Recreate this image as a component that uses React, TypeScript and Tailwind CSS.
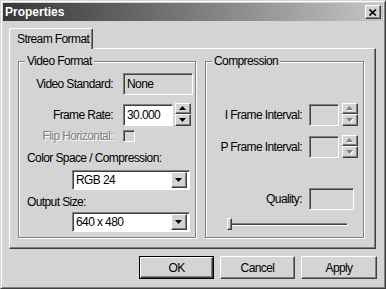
const ui = "font-['Liberation_Sans',Arial,sans-serif] text-[12px] tracking-[-0.6px] text-black";

const raised =
  'border border-t-white border-l-white border-r-[#404040] border-b-[#404040] shadow-[inset_-1px_-1px_0_#808080] bg-[#d4d4d4]';
const sunken =
  'border border-t-[#808080] border-l-[#808080] border-r-white border-b-white shadow-[inset_1px_1px_0_#404040]';

function Arrow({ dir, disabled }: { dir: 'up' | 'down'; disabled?: boolean }) {
  const d = dir === 'up' ? 'M3.5 0 L7 4 L0 4 Z' : 'M0 0 L7 0 L3.5 4 Z';
  return (
    <svg width="8" height="5" viewBox="0 0 8 5" className="block">
      {disabled && <path d={d} transform="translate(1 1)" fill="#fff" />}
      <path d={d} fill={disabled ? '#808080' : '#000'} />
    </svg>
  );
}

function Spinner({ disabled }: { disabled?: boolean }) {
  return (
    <div className="flex flex-col w-[16px] h-[23px]">
      <div className={`${raised} h-[11px] flex items-center justify-center`}>
        <Arrow dir="up" disabled={disabled} />
      </div>
      <div className={`${raised} h-[12px] flex items-center justify-center`}>
        <Arrow dir="down" disabled={disabled} />
      </div>
    </div>
  );
}

function Combo({ value }: { value: string }) {
  return (
    <div className={`${sunken} bg-white w-[118px] h-[20px] flex items-center p-[2px] pl-[3px]`}>
      <span className="flex-1 leading-none">{value}</span>
      <div className={`${raised} w-[16px] h-[16px] flex items-center justify-center`}>
        <Arrow dir="down" />
      </div>
    </div>
  );
}

function Group({ title, className, children }: { title: string; className: string; children: React.ReactNode }) {
  return (
    <div
      className={`relative border border-[#808080] shadow-[1px_1px_0_#fff,inset_1px_1px_0_#fff] h-[177px] ${className}`}
    >
      <span className="absolute -top-[8px] left-[6px] bg-[#d4d4d4] px-[2px] leading-[14px]">{title}</span>
      {children}
    </div>
  );
}

export default function App() {
  return (
    <div
      className={`${ui} w-[386px] h-[289px] bg-[#d4d4d4] p-[3px] flex flex-col border border-t-[#d4d4d4] border-l-[#d4d4d4] border-r-[#404040] border-b-[#404040] shadow-[inset_1px_1px_0_#fff,inset_-1px_-1px_0_#808080]`}
    >
      {/* Title bar */}
      <div className="h-[18px] -mt-[1px] -mx-[1px] flex items-center justify-between bg-linear-to-r from-[#383838] to-[#c6c6c6] pl-[2px] pr-[2px]">
        <span className="font-bold text-[12px] tracking-normal text-white">Properties</span>
        <div className={`${raised} w-[16px] h-[14px] flex items-center justify-center`}>
          <svg width="8" height="7" viewBox="0 0 8 7">
            <path d="M0.5 0.5 L7 6.5 M7 0.5 L0.5 6.5" stroke="#000" strokeWidth="1.6" />
          </svg>
        </div>
      </div>

      {/* Tabs */}
      <div className="pl-[5px] pr-[6px] pt-[7px]">
        <div className="flex">
          <div className="relative z-10 -mb-[1px] w-[84px] h-[21px] bg-[#d4d4d4] border-t border-l border-t-white border-l-white border-r border-r-[#404040] shadow-[inset_-1px_0_0_#808080] rounded-tl-[2px] rounded-tr-[2px] flex items-center pl-[7px] whitespace-nowrap">
            Stream Format
          </div>
        </div>
        <div className={`${raised} h-[201px] pl-[8px] pt-[12px] flex gap-[9px]`}>
          <Group title="Video Format" className="w-[178px]">
            <div className="flex items-center mt-[11px] h-[22px]">
              <span className="w-[94px] text-right">Video Standard:</span>
              <div className={`${sunken} ml-[10px] w-[70px] h-[22px] flex items-center pl-[3px]`}>None</div>
            </div>
            <div className="flex items-center mt-[8px] h-[23px]">
              <span className="w-[94px] text-right">Frame Rate:</span>
              <div className={`${sunken} ml-[10px] w-[50px] h-[22px] bg-white flex items-center pl-[3px]`}>30.000</div>
              <div className="ml-[2px]">
                <Spinner />
              </div>
            </div>
            <div className="flex items-center mt-[4px] h-[12px]">
              <span className="w-[94px] text-right text-[#808080] [text-shadow:1px_1px_0_#fff]">Flip Horizontal:</span>
              <div className={`${sunken} ml-[10px] w-[12px] h-[12px]`} />
            </div>
            <div className="mt-[9px] pl-[8px] leading-[14px]">Color Space / Compression:</div>
            <div className="mt-[5px] pl-[53px]">
              <Combo value="RGB 24" />
            </div>
            <div className="mt-[5px] pl-[8px] leading-[14px]">Output Size:</div>
            <div className="mt-[3px] pl-[53px]">
              <Combo value="640 x 480" />
            </div>
          </Group>

          <Group title="Compression" className="w-[159px]">
            <div className="flex items-center mt-[41px] h-[23px]">
              <span className="w-[96px] text-right">I Frame Interval:</span>
              <div className={`${sunken} ml-[7px] w-[30px] h-[22px]`} />
              <div className="ml-[3px]">
                <Spinner disabled />
              </div>
            </div>
            <div className="flex items-center mt-[9px] h-[23px]">
              <span className="w-[96px] text-right">P Frame Interval:</span>
              <div className={`${sunken} ml-[7px] w-[30px] h-[22px]`} />
              <div className="ml-[3px]">
                <Spinner disabled />
              </div>
            </div>
            <div className="flex items-center mt-[30px] h-[22px]">
              <span className="w-[96px] text-right">Quality:</span>
              <div className={`${sunken} ml-[7px] w-[45px] h-[22px]`} />
            </div>
            <div className="relative mt-[8px] ml-[21px] w-[121px] h-[12px] flex items-center">
              <div className="w-full h-[3px] border-t border-l border-t-[#808080] border-l-[#808080] border-b border-r border-b-white border-r-white bg-[#404040]" />
              <div className={`${raised} absolute left-0 top-0 w-[5px] h-[12px]`} />
            </div>
          </Group>
        </div>
      </div>

      {/* Buttons */}
      <div className="flex justify-end gap-[6px] pr-[5px] mt-[7px]">
        <div className="w-[75px] h-[23px] border border-black">
          <div className={`${raised} w-full h-full flex items-center justify-center`}>OK</div>
        </div>
        <div className={`${raised} w-[75px] h-[23px] flex items-center justify-center`}>Cancel</div>
        <div className={`${raised} w-[76px] h-[23px] flex items-center justify-center`}>Apply</div>
      </div>
    </div>
  );
}
